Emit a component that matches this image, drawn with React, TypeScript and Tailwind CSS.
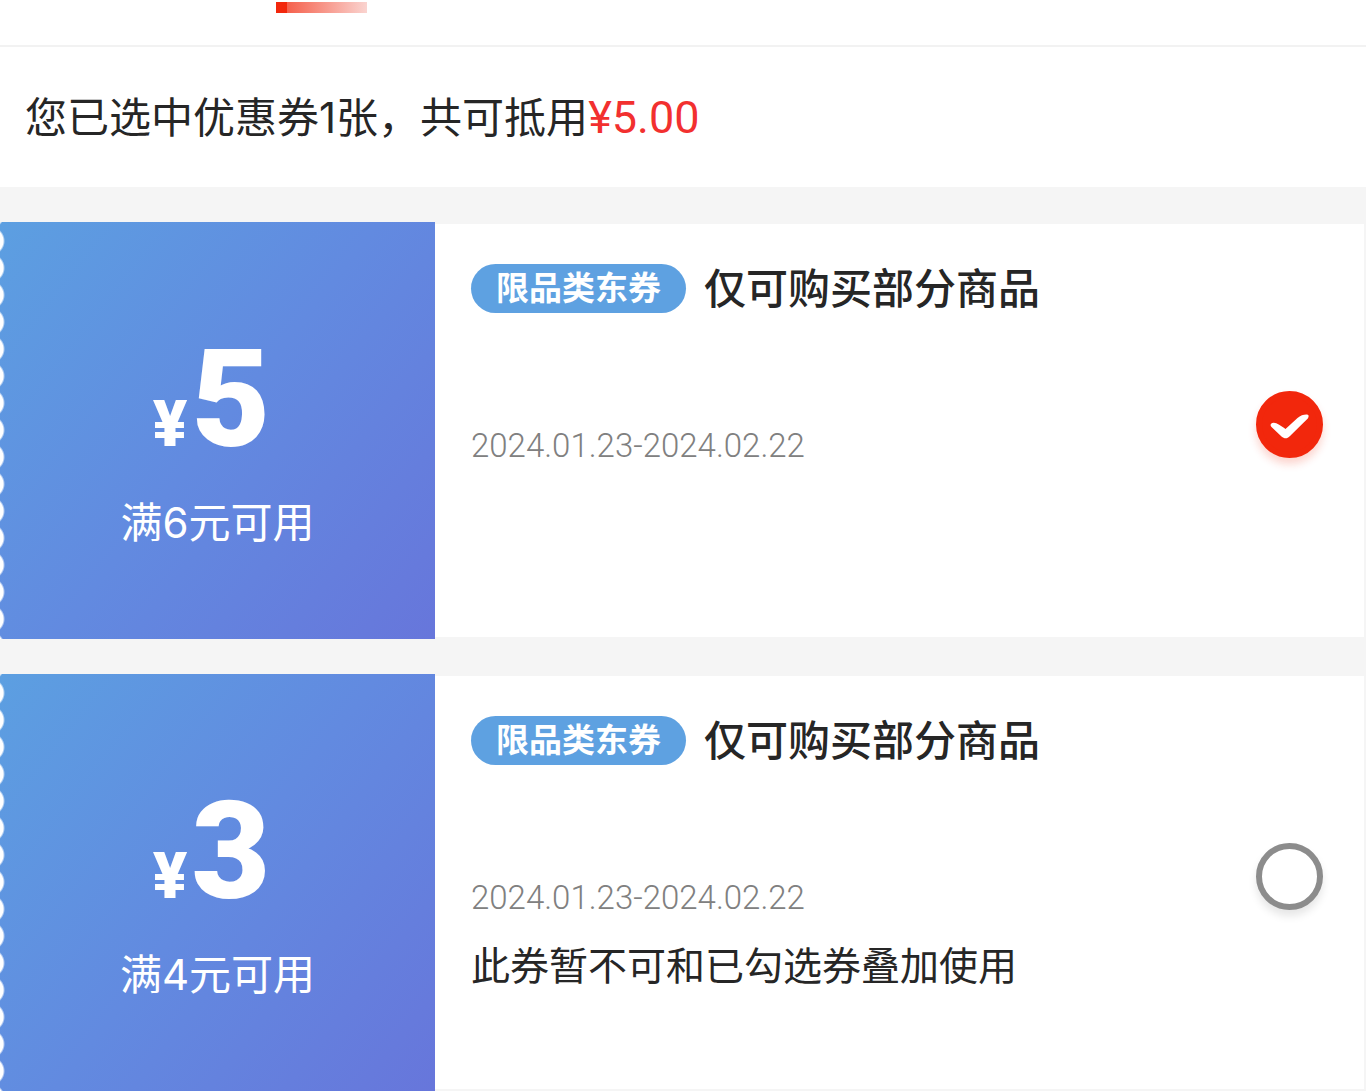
import { useState } from "react";

type Coupon = {
  id: string;
  amount: number;
  condition: string;
  tag: string;
  title: string;
  period: string;
  note?: string;
};

const coupons: Coupon[] = [
  {
    id: "coupon-5",
    amount: 5,
    condition: "满6元可用",
    tag: "限品类东券",
    title: "仅可购买部分商品",
    period: "2024.01.23-2024.02.22",
  },
  {
    id: "coupon-3",
    amount: 3,
    condition: "满4元可用",
    tag: "限品类东券",
    title: "仅可购买部分商品",
    period: "2024.01.23-2024.02.22",
    note: "此券暂不可和已勾选券叠加使用",
  },
];

function CouponCheckbox({ id, label, checked, onChange }: {
  id: string;
  label: string;
  checked: boolean;
  onChange: () => void;
}) {
  return (
    <label htmlFor={id} className="grid shrink-0 cursor-pointer place-items-center">
      <input
        id={id}
        type="checkbox"
        aria-label={label}
        checked={checked}
        onChange={onChange}
        className="peer col-start-1 row-start-1 size-[67px] appearance-none rounded-full border-[6px] border-[#8c8c8c] bg-white shadow-[0_6px_8px_rgba(0,0,0,0.1)] checked:border-[#f2270c] checked:bg-[#f2270c] checked:shadow-[0_6px_8px_rgba(242,39,12,0.2)]"
      />
      <svg
        viewBox="0 0 67 67"
        className="pointer-events-none col-start-1 row-start-1 hidden size-[67px] peer-checked:block"
        fill="white"
      >
        <path d="M17.5 31.8 C20.5 31.5 25 35 29.5 38 L41.5 27 C44.5 24.5 48 23.4 51 23.6 C53 23.8 53 26 51.8 27.4 L34 45 C31 48 28.5 48 25.5 45.5 L15.5 36 C13.5 34 15 32 17.5 31.8 Z" />
      </svg>
    </label>
  );
}

function CouponCard({ coupon, checked, onToggle }: {
  coupon: Coupon;
  checked: boolean;
  onToggle: () => void;
}) {
  return (
    <li className="flex min-h-[417px]">
      {/* Value stub with the perforated edge */}
      <div className="flex w-[435px] shrink-0 bg-[linear-gradient(128deg,#5c9fe1_0%,#628ae0_50%,#6776db_100%)]">
        <div className="-mr-2 w-2 bg-[radial-gradient(circle_at_-10px_13px,#fff_13px,transparent_15px)] bg-[length:8px_27px] bg-[position:0_6px] bg-repeat-y"></div>
        <div className="flex flex-1 flex-col items-center justify-center pt-4 text-white">
          <div className="flex items-baseline gap-1 pr-3 font-['Roboto',sans-serif] font-black">
            <span className="text-[64px] leading-none">¥</span>
            <span className="text-[136px] leading-[138px]">{coupon.amount}</span>
          </div>
          <p className="mt-[30px] text-[42px] leading-[48px]">{coupon.condition}</p>
        </div>
      </div>

      <div className="my-[2px] flex flex-1 items-center border-r-2 border-[#f5f5f5] bg-white pr-[41px] pl-9">
        <div className="flex-1 self-stretch pt-10">
          <div className="flex items-center gap-[18px]">
            <span className="flex h-[49px] items-center rounded-full bg-[#5ea1e1] px-[25px] text-[33px] leading-none font-bold text-white">
              {coupon.tag}
            </span>
            <h2 className="text-[42px] leading-[49px] font-medium text-[#262626]">{coupon.title}</h2>
          </div>
          <p className="mt-[109px] font-['Roboto',sans-serif] text-[33px] leading-[48px] font-light text-[#808080]">
            {coupon.period}
          </p>
          {coupon.note && (
            <p className="mt-5 text-[39px] leading-[48px] text-[#262626]">{coupon.note}</p>
          )}
        </div>
        <div className="pb-3">
          <CouponCheckbox
            id={coupon.id}
            label={`${coupon.title} ¥${coupon.amount}`}
            checked={checked}
            onChange={onToggle}
          />
        </div>
      </div>
    </li>
  );
}

export default function App() {
  const [selected, setSelected] = useState<string[]>(["coupon-5"]);

  const total = coupons
    .filter((c) => selected.includes(c.id))
    .reduce((sum, c) => sum + c.amount, 0);

  const toggle = (id: string) => {
    setSelected((prev) => (prev.includes(id) ? prev.filter((s) => s !== id) : [...prev, id]));
  };

  return (
    <main className="bg-[#f5f5f5] font-['Inter','Noto_Sans_CJK_SC',sans-serif] text-[#262626]" lang="zh-CN">
      {/* Active tab underline */}
      <div className="flex h-[47px] border-b-2 border-[#f2f2f2] bg-white pt-[2px] pl-[276px]">
        <div className="h-[11px] w-[91px] bg-[linear-gradient(90deg,#f2270c_11px,#f5604c_11px,#fad4d0_100%)]"></div>
      </div>

      <div className="bg-white px-[25px] pt-[47px] pb-[45px]">
        <p className="text-[42px] leading-[48px]">
          您已选中优惠券{selected.length}张，共可抵用
          <span className="font-['Roboto',sans-serif] text-[45px] leading-none text-[#f2302f]">¥{total.toFixed(2)}</span>
        </p>
      </div>

      <ul className="flex flex-col gap-[35px] pt-[35px]">
        {coupons.map((coupon) => (
          <CouponCard
            key={coupon.id}
            coupon={coupon}
            checked={selected.includes(coupon.id)}
            onToggle={() => toggle(coupon.id)}
          />
        ))}
      </ul>
    </main>
  );
}
